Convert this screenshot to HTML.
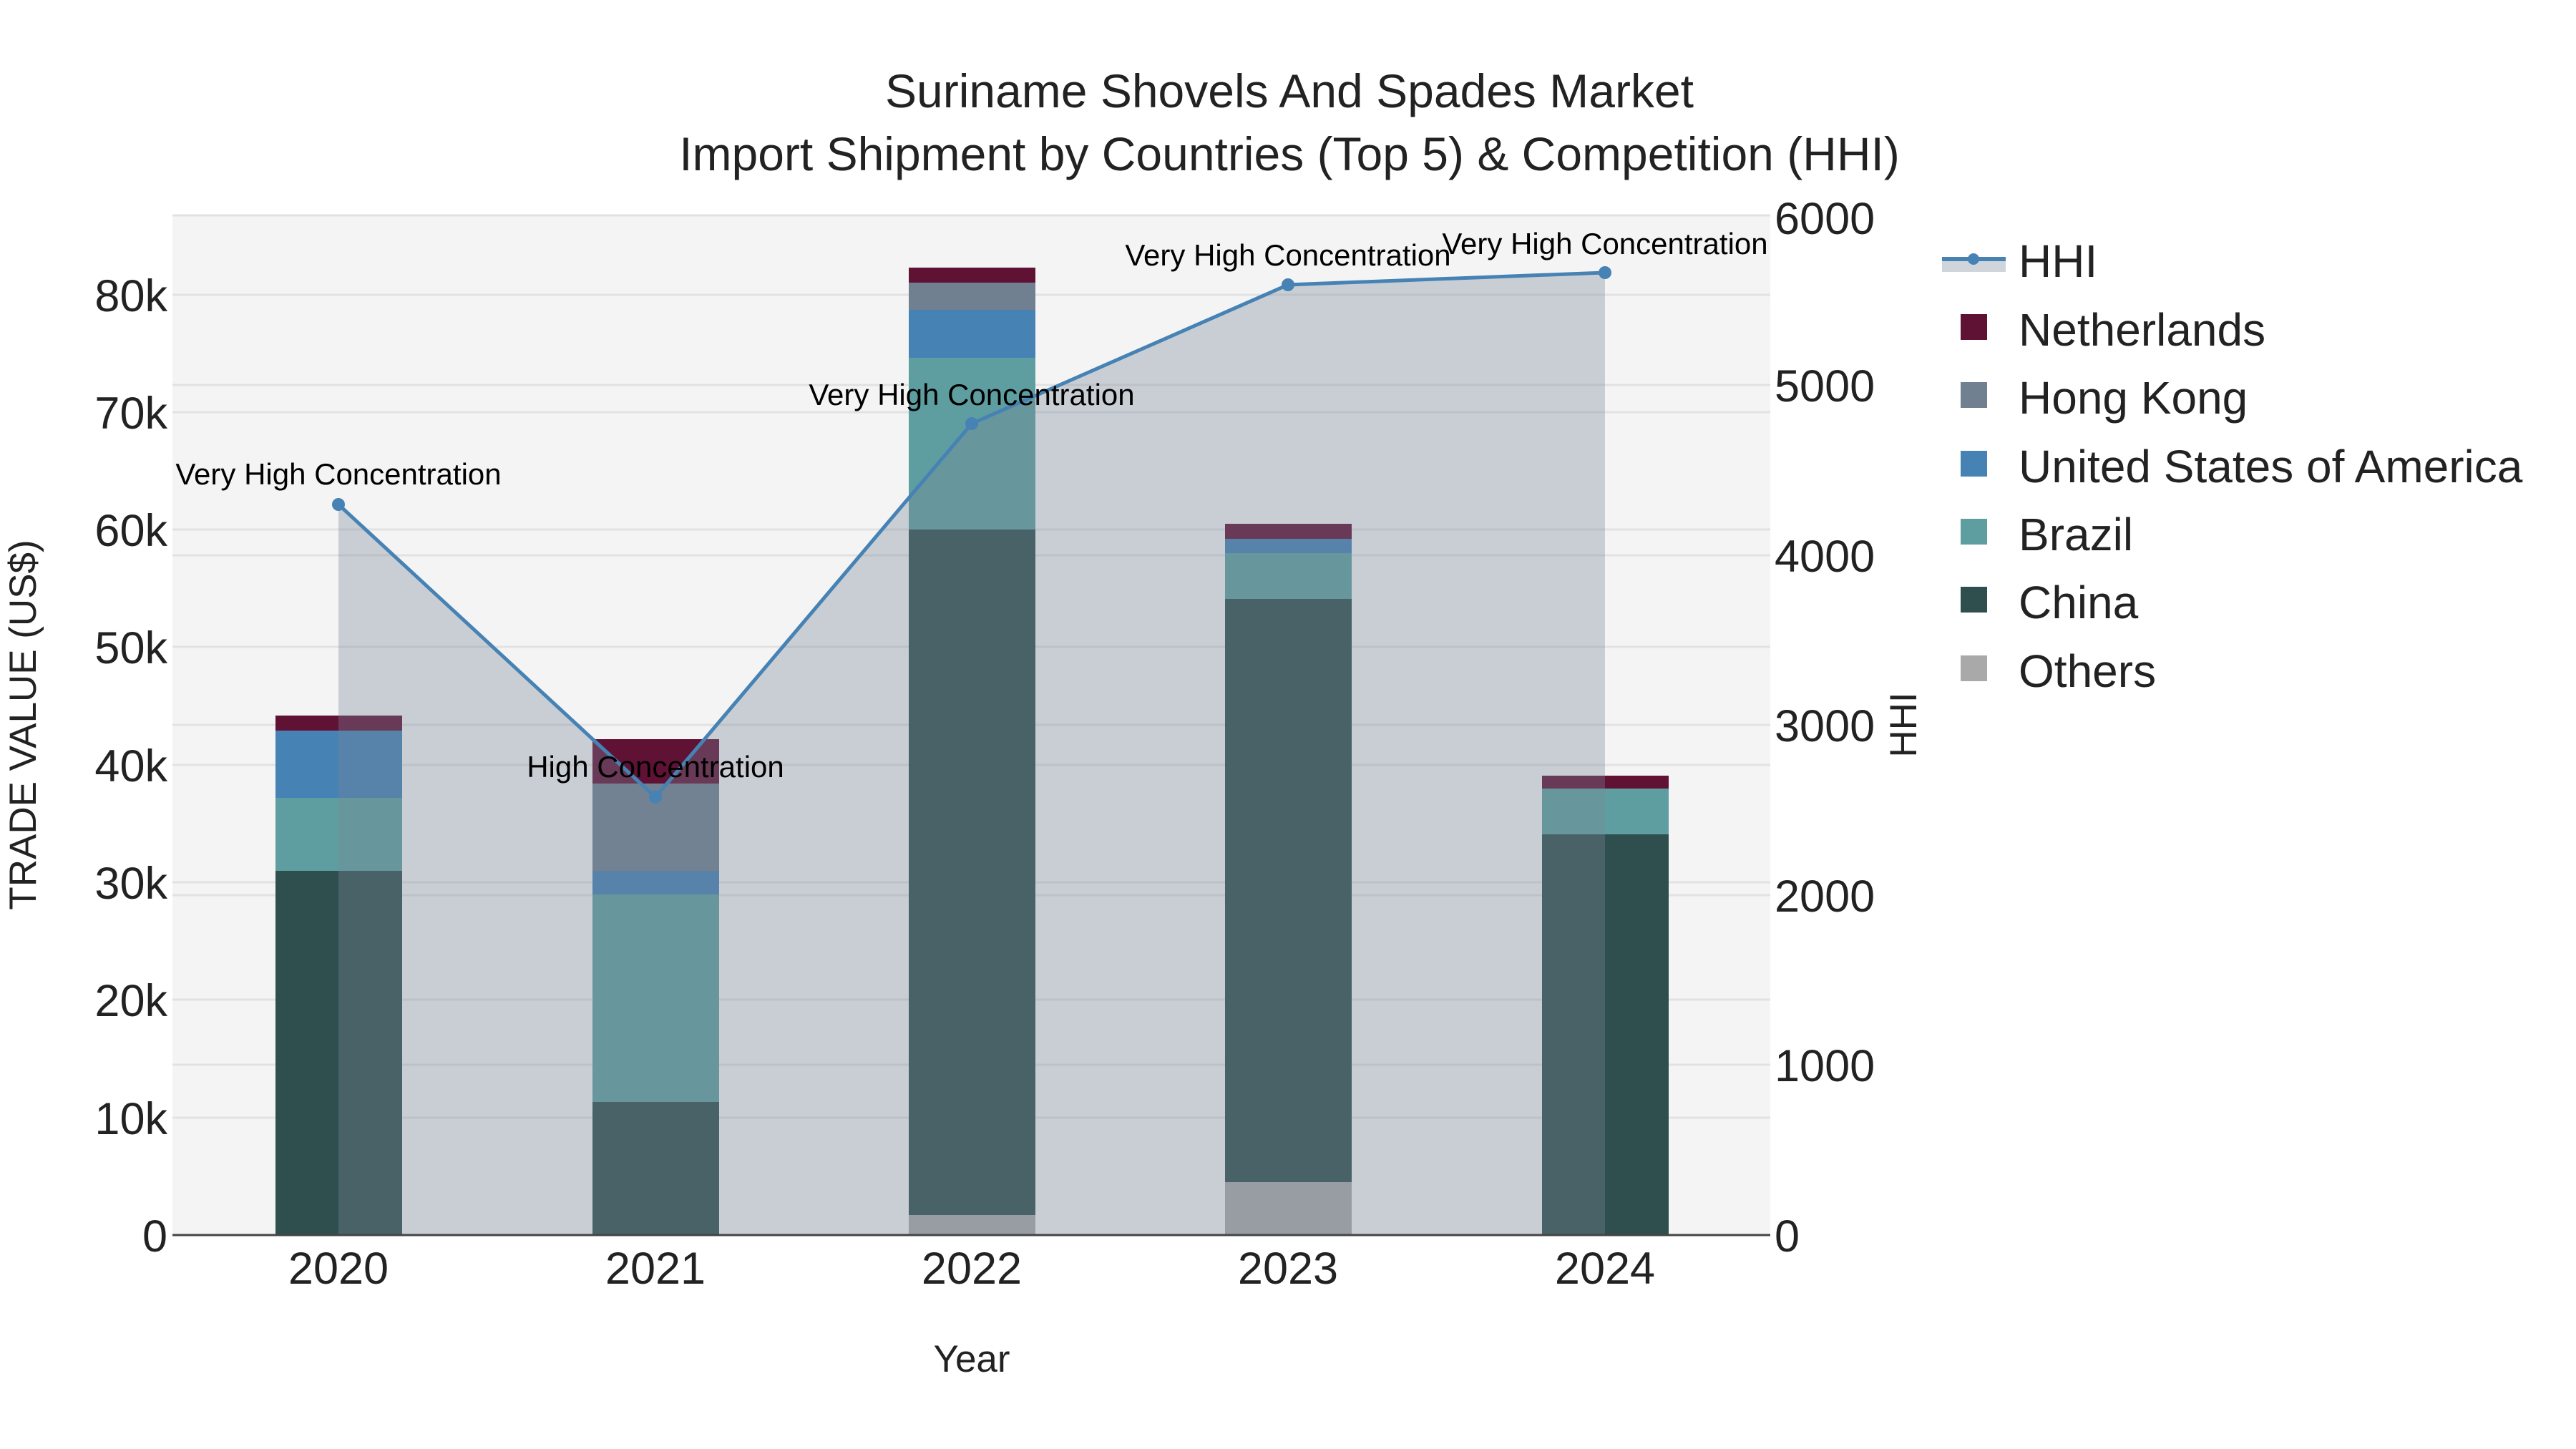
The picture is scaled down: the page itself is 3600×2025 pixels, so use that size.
<!DOCTYPE html>
<html><head><meta charset="utf-8"><style>html,body{margin:0;padding:0;background:#fff}svg{display:block}text{font-family:"Liberation Sans",sans-serif}</style></head><body>
<svg width="3600" height="2025" viewBox="0 0 3600 2025" xmlns="http://www.w3.org/2000/svg">
<rect width="3600" height="2025" fill="#fff"/>
<rect x="241" y="301" width="2233" height="1425" fill="#f4f4f4"/>
<g stroke="#e2e2e2" stroke-width="3">
<line x1="241" x2="2474" y1="1562" y2="1562"/><line x1="241" x2="2474" y1="1397" y2="1397"/><line x1="241" x2="2474" y1="1233" y2="1233"/><line x1="241" x2="2474" y1="1069" y2="1069"/><line x1="241" x2="2474" y1="904" y2="904"/><line x1="241" x2="2474" y1="740" y2="740"/><line x1="241" x2="2474" y1="576" y2="576"/><line x1="241" x2="2474" y1="412" y2="412"/>
<line x1="241" x2="2474" y1="1488" y2="1488"/><line x1="241" x2="2474" y1="1251" y2="1251"/><line x1="241" x2="2474" y1="1013" y2="1013"/><line x1="241" x2="2474" y1="776" y2="776"/><line x1="241" x2="2474" y1="538" y2="538"/><line x1="241" x2="2474" y1="301" y2="301"/>
</g>
<g>
<rect x="385" y="1217" width="177" height="509" fill="#2f4f4f"/>
<rect x="385" y="1115" width="177" height="102" fill="#5f9ea0"/>
<rect x="385" y="1021" width="177" height="94" fill="#4682b4"/>
<rect x="385" y="1000" width="177" height="21" fill="#601235"/>

<rect x="828" y="1540" width="177" height="186" fill="#2f4f4f"/>
<rect x="828" y="1250" width="177" height="290" fill="#5f9ea0"/>
<rect x="828" y="1217" width="177" height="33" fill="#4682b4"/>
<rect x="828" y="1095" width="177" height="122" fill="#708090"/>
<rect x="828" y="1033" width="177" height="62" fill="#601235"/>

<rect x="1270" y="1698" width="177" height="28" fill="#a9a9a9"/>
<rect x="1270" y="740" width="177" height="958" fill="#2f4f4f"/>
<rect x="1270" y="500" width="177" height="240" fill="#5f9ea0"/>
<rect x="1270" y="433" width="177" height="67" fill="#4682b4"/>
<rect x="1270" y="395" width="177" height="38" fill="#708090"/>
<rect x="1270" y="374" width="177" height="21" fill="#601235"/>

<rect x="1712" y="1652" width="177" height="74" fill="#a9a9a9"/>
<rect x="1712" y="837" width="177" height="815" fill="#2f4f4f"/>
<rect x="1712" y="773" width="177" height="64" fill="#5f9ea0"/>
<rect x="1712" y="753" width="177" height="20" fill="#4682b4"/>
<rect x="1712" y="732" width="177" height="21" fill="#601235"/>

<rect x="2155" y="1166" width="177" height="560" fill="#2f4f4f"/>
<rect x="2155" y="1102" width="177" height="64" fill="#5f9ea0"/>
<rect x="2155" y="1084" width="177" height="18" fill="#601235"/>
</g>
<polygon points="473,1726 473,705 916,1114 1358,592 1800,398 2243,381 2243,1726" fill="rgba(119,136,153,0.35)"/>
<polyline points="473,705 916,1114 1358,592 1800,398 2243,381" fill="none" stroke="#4682b4" stroke-width="5"/>
<g fill="#4682b4"><circle cx="473" cy="705" r="9"/><circle cx="916" cy="1114" r="9"/><circle cx="1358" cy="592" r="9"/><circle cx="1800" cy="398" r="9"/><circle cx="2243" cy="381" r="9"/></g>
<line x1="241" x2="2474" y1="1726" y2="1726" stroke="#444" stroke-width="3"/>
<g font-size="42" text-anchor="middle" fill="#000">
<text x="473" y="677">Very High Concentration</text>
<text x="916" y="1086">High Concentration</text>
<text x="1358" y="566">Very High Concentration</text>
<text x="1800" y="371">Very High Concentration</text>
<text x="2243" y="355">Very High Concentration</text>
</g>
<g font-size="63" text-anchor="end" fill="#222">
<text x="234" y="1749">0</text><text x="234" y="1585">10k</text><text x="234" y="1420">20k</text><text x="234" y="1256">30k</text><text x="234" y="1092">40k</text><text x="234" y="927">50k</text><text x="234" y="763">60k</text><text x="234" y="599">70k</text><text x="234" y="435">80k</text>
</g>
<g font-size="63" text-anchor="start" fill="#222">
<text x="2480" y="1749">0</text><text x="2480" y="1511">1000</text><text x="2480" y="1274">2000</text><text x="2480" y="1036">3000</text><text x="2480" y="799">4000</text><text x="2480" y="561">5000</text><text x="2480" y="327">6000</text>
</g>
<g font-size="63" text-anchor="middle" fill="#222">
<text x="473" y="1794">2020</text><text x="916" y="1794">2021</text><text x="1358" y="1794">2022</text><text x="1800" y="1794">2023</text><text x="2243" y="1794">2024</text>
</g>
<text x="1358" y="1917" font-size="53" text-anchor="middle" fill="#222">Year</text>
<text transform="translate(50,1013) rotate(-90)" font-size="53" text-anchor="middle" fill="#222">TRADE VALUE (US$)</text>
<text transform="translate(2678,1013) rotate(-90)" font-size="53" text-anchor="middle" fill="#222">HHI</text>
<g font-size="66" text-anchor="middle" fill="#222">
<text x="1802" y="150">Suriname Shovels And Spades Market</text>
<text x="1802" y="238">Import Shipment by Countries (Top 5) &amp; Competition (HHI)</text>
</g>
<rect x="2714" y="362" width="89" height="18" fill="rgba(119,136,153,0.35)"/>
<line x1="2714" x2="2803" y1="362" y2="362" stroke="#4682b4" stroke-width="6"/>
<circle cx="2758" cy="362" r="8" fill="#4682b4"/>
<g>
<rect x="2740" y="439" width="37" height="36" fill="#601235"/>
<rect x="2740" y="534" width="37" height="36" fill="#708090"/>
<rect x="2740" y="630" width="37" height="36" fill="#4682b4"/>
<rect x="2740" y="725" width="37" height="36" fill="#5f9ea0"/>
<rect x="2740" y="820" width="37" height="36" fill="#2f4f4f"/>
<rect x="2740" y="916" width="37" height="36" fill="#a9a9a9"/>
</g>
<g font-size="64" fill="#222">
<text x="2821" y="387">HHI</text>
<text x="2821" y="483">Netherlands</text>
<text x="2821" y="578">Hong Kong</text>
<text x="2821" y="674">United States of America</text>
<text x="2821" y="769">Brazil</text>
<text x="2821" y="864">China</text>
<text x="2821" y="960">Others</text>
</g>
</svg>
</body></html>
